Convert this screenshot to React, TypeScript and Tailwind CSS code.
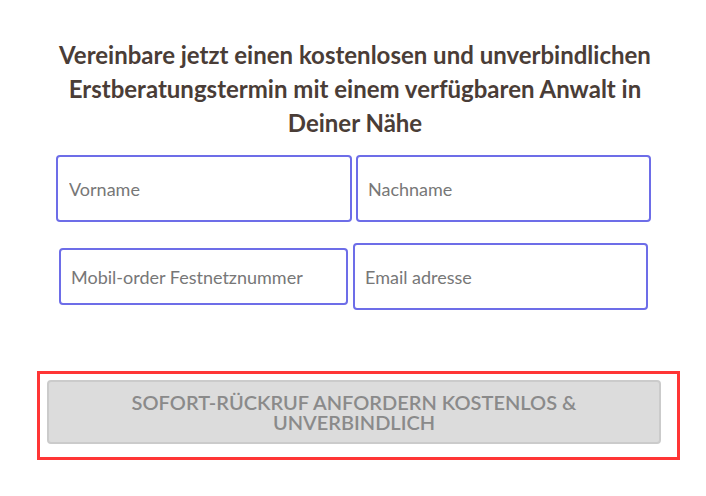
const Field = ({ placeholder, className }: { placeholder: string; className: string }) => (
  <input
    type="text"
    placeholder={placeholder}
    className={`border-2 border-[#6d6de8] rounded-[4px] bg-white pl-[10px] text-[18px] text-[#555] placeholder:text-[#777] outline-none ${className}`}
  />
);

export default function App() {
  return (
    <div className="w-[706px] h-[496px] bg-white font-['Lato',sans-serif]">
      <h1 className="ml-[50px] w-[610px] pt-[38px] text-center text-[24px] leading-[34px] font-bold text-[#4a3d37]">
        Vereinbare jetzt einen kostenlosen und unverbindlichen Erstberatungstermin mit einem verfügbaren Anwalt in Deiner Nähe
      </h1>

      <div className="ml-[56px] mt-[15px] flex flex-col">
        <div className="flex gap-[4px]">
          <Field placeholder="Vorname" className="w-[296px] h-[67px] pl-[11px]" />
          <Field placeholder="Nachname" className="w-[295px] h-[67px]" />
        </div>
        <div className="mt-[21px] flex items-center">
          <Field placeholder="Mobil-order Festnetznummer" className="ml-[3px] w-[289px] h-[57px]" />
          <Field placeholder="Email adresse" className="ml-[5px] w-[295px] h-[67px]" />
        </div>
      </div>

      <div className="ml-[37px] mt-[61px] w-[643px] h-[89px] border-[3px] border-[#ff3535] pt-[6px] pl-[7px]">
        <button className="w-[614px] h-[64px] rounded-[4px] border-2 border-[#cbcbcb] bg-[#dcdcdc] text-[20px] leading-[20px] font-semibold uppercase text-[#8a8a8a] px-[70px]">
          Sofort-Rückruf anfordern kostenlos &amp; unverbindlich
        </button>
      </div>
    </div>
  );
}
